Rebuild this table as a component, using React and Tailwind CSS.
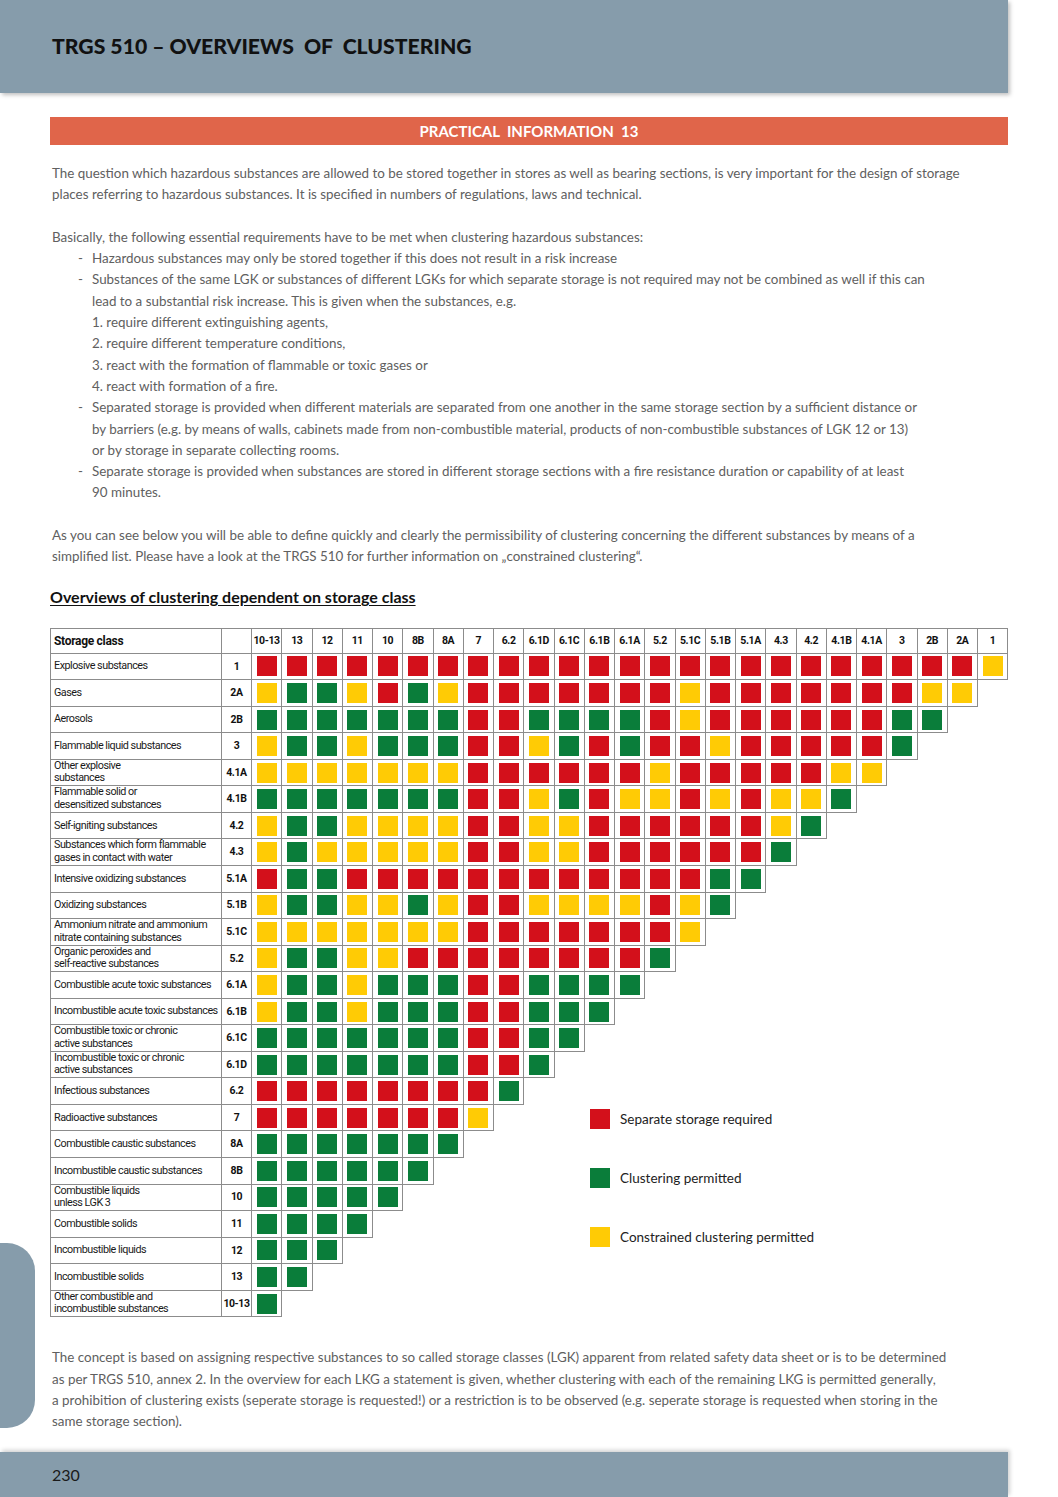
import React from "react";

const COLS = ["10-13", "13", "12", "11", "10", "8B", "8A", "7", "6.2", "6.1D", "6.1C", "6.1B", "6.1A", "5.2", "5.1C", "5.1B", "5.1A", "4.3", "4.2", "4.1B", "4.1A", "3", "2B", "2A", "1"];

// R = separate storage, G = clustering permitted, Y = constrained
const ROWS = [
  ["Explosive substances", "1", "R".repeat(24) + "Y"],
  ["Gases", "2A", "YGGYRGY" + "RRRRRRRYRRRRRRRYY"],
  ["Aerosols", "2B", "GGGGGGG" + "RRGGGGRYRRRRRRGG"],
  ["Flammable liquid substances", "3", "YGGYGGG" + "RRYGRGRRYRRRRRG"],
  ["Other explosive\nsubstances", "4.1A", "YYYYYYY" + "RRRRRRYRRRRRYY"],
  ["Flammable solid or\ndesensitized substances", "4.1B", "GGGGGGG" + "RRYGRYYRYRYYG"],
  ["Self-igniting substances", "4.2", "YGGYYYY" + "RRYYRRRRRRYG"],
  ["Substances which form flammable\ngases in contact with water", "4.3", "YGYYYYY" + "RRYYRRRRRRG"],
  ["Intensive oxidizing substances", "5.1A", "RGGRRRR" + "RRRRRRRRGG"],
  ["Oxidizing substances", "5.1B", "YGGYYGY" + "RRYYYYRYG"],
  ["Ammonium nitrate and ammonium\nnitrate containing substances", "5.1C", "YYYYYYY" + "RRRRRRRY"],
  ["Organic peroxides and\nself-reactive substances", "5.2", "YGGYYRR" + "RRRRRRG"],
  ["Combustible acute toxic substances", "6.1A", "YGGYGGG" + "RRGGGG"],
  ["Incombustible acute toxic substances", "6.1B", "YGGYGGG" + "RRGGG"],
  ["Combustible toxic or chronic\nactive substances", "6.1C", "GGGGGGG" + "RRGG"],
  ["Incombustible toxic or chronic\nactive substances", "6.1D", "GGGGGGG" + "RRG"],
  ["Infectious substances", "6.2", "RRRRRRR" + "RG"],
  ["Radioactive substances", "7", "RRRRRRR" + "Y"],
  ["Combustible caustic substances", "8A", "GGGGGGG"],
  ["Incombustible caustic substances", "8B", "GGGGGG"],
  ["Combustible liquids\nunless LGK 3", "10", "GGGGG"],
  ["Combustible solids", "11", "GGGG"],
  ["Incombustible liquids", "12", "GGG"],
  ["Incombustible solids", "13", "GG"],
  ["Other combustible and\nincombustible substances", "10-13", "G"],
];

const SWATCH = {
  R: "bg-[#d3101b]",
  G: "bg-[#0a7d3a]",
  Y: "bg-[#ffcb05]",
};

const line = "border-[#8c8c8c]";

function Square({ c }) {
  return <div className={`w-[20px] h-[20px] ${SWATCH[c]}`} />;
}

function ClusterTable() {
  return (
    <div className="relative ml-[50px] mt-[21px] font-['Roboto',sans-serif] text-[#111]">
      <div className="flex h-[26px]">
        <div className={`w-[172px] border-l border-t border-r border-b ${line} flex items-center pl-[3px] text-[12px] tracking-[-0.3px] font-bold`}>Storage class</div>
        <div className={`w-[30px] border-t border-r border-b ${line}`} />
        {COLS.map(c => (
          <div key={c} className={`w-[30.25px] border-t border-r border-b ${line} flex items-center justify-center text-[10.5px] tracking-[-0.4px] font-bold whitespace-nowrap`}>{c}</div>
        ))}
      </div>
      {ROWS.map(([label, code, cells]) => {
        const twoLines = label.includes("\n");
        return (
          <div key={code} className="flex h-[26.56px]">
            <div className={`w-[172px] border-l border-r border-b ${line} pl-[3px] text-[10.8px] tracking-[-0.5px] text-[#1a1a1a] flex flex-col ${twoLines ? "justify-start leading-[12.4px]" : "justify-center"}`}>
              {label.split("\n").map(t => <span key={t} className="whitespace-nowrap">{t}</span>)}
            </div>
            <div className={`w-[30px] border-r border-b ${line} flex items-center justify-center text-[10.5px] tracking-[-0.4px] font-bold whitespace-nowrap`}>{code}</div>
            {cells.split("").map((c, i) => (
              <div key={i} className={`w-[30.25px] border-r border-b ${line} flex items-center justify-center`}>
                <Square c={c} />
              </div>
            ))}
          </div>
        );
      })}

      <div className="absolute left-[540px] top-[481px] flex flex-col gap-[39px] font-['Lato',sans-serif] text-[13.5px] text-[#222]">
        {[["R", "Separate storage required"], ["G", "Clustering permitted"], ["Y", "Constrained clustering permitted"]].map(([c, t]) => (
          <div key={c} className="flex items-center gap-[10px] h-[20px]">
            <Square c={c} />
            <span>{t}</span>
          </div>
        ))}
      </div>
    </div>
  );
}

function Item({ children }) {
  return (
    <div className="flex pl-[26px]">
      <span className="w-[14px]">-</span>
      <div>{children}</div>
    </div>
  );
}

export default function App() {
  return (
    <div className="relative min-h-[1497px] w-[1058px] bg-white flex flex-col font-['Lato',sans-serif]">
      <div className="w-[1008px] h-[93px] bg-[#869cab] shadow-[2px_2px_4px_rgba(0,0,0,0.25)] flex items-center pl-[52px]">
        <h1 className="text-[21.2px] font-black text-[#111] whitespace-pre">TRGS 510 – OVERVIEWS  OF  CLUSTERING</h1>
      </div>

      <div className="ml-[50px] mt-[24px] w-[958px] h-[28px] bg-[#e0654a] flex items-center justify-center text-white text-[15px] font-bold whitespace-pre">
        PRACTICAL  INFORMATION  13
      </div>

      <div className="ml-[52px] mt-[18px] text-[13.4px] leading-[21.3px] text-[#606060] whitespace-nowrap">
        <p>
          The question which hazardous substances are allowed to be stored together in stores as well as bearing sections, is very important for the design of storage<br />
          places referring to hazardous substances. It is specified in numbers of regulations, laws and technical.
        </p>
        <div className="mt-[21.3px]">
          <p>Basically, the following essential requirements have to be met when clustering hazardous substances:</p>
          <Item>Hazardous substances may only be stored together if this does not result in a risk increase</Item>
          <Item>
            Substances of the same LGK or substances of different LGKs for which separate storage is not required may not be combined as well if this can<br />
            lead to a substantial risk increase. This is given when the substances, e.g.<br />
            1. require different extinguishing agents,<br />
            2. require different temperature conditions,<br />
            3. react with the formation of flammable or toxic gases or<br />
            4. react with formation of a fire.
          </Item>
          <Item>
            Separated storage is provided when different materials are separated from one another in the same storage section by a sufficient distance or<br />
            by barriers (e.g. by means of walls, cabinets made from non-combustible material, products of non-combustible substances of LGK 12 or 13)<br />
            or by storage in separate collecting rooms.
          </Item>
          <Item>
            Separate storage is provided when substances are stored in different storage sections with a fire resistance duration or capability of at least<br />
            90 minutes.
          </Item>
        </div>
        <p className="mt-[21.3px]">
          As you can see below you will be able to define quickly and clearly the permissibility of clustering concerning the different substances by means of a<br />
          simplified list. Please have a look at the TRGS 510 for further information on „constrained clustering“.
        </p>
      </div>

      <h2 className="ml-[50px] mt-[19px] h-[20px] leading-[20px] text-[16px] font-bold text-[#111] underline underline-offset-2">
        Overviews of clustering dependent on storage class
      </h2>

      <ClusterTable />

      <p className="ml-[52px] mt-[30px] text-[13.4px] leading-[21.3px] text-[#606060] whitespace-nowrap">
        The concept is based on assigning respective substances to so called storage classes (LGK) apparent from related safety data sheet or is to be determined<br />
        as per TRGS 510, annex 2. In the overview for each LKG a statement is given, whether clustering with each of the remaining LKG is permitted generally,<br />
        a prohibition of clustering exists (seperate storage is requested!) or a restriction is to be observed (e.g. seperate storage is requested when storing in the<br />
        same storage section).
      </p>

      <div className="absolute left-0 top-[1243px] w-[35px] h-[185px] rounded-r-[28px] bg-[#869cab]" />

      <div className="mt-auto w-[1008px] h-[45px] bg-[#869cab] shadow-[2px_-2px_4px_rgba(0,0,0,0.18)] flex items-center pl-[52px] text-[16px] text-[#1a1a1a]">
        230
      </div>
    </div>
  );
}
